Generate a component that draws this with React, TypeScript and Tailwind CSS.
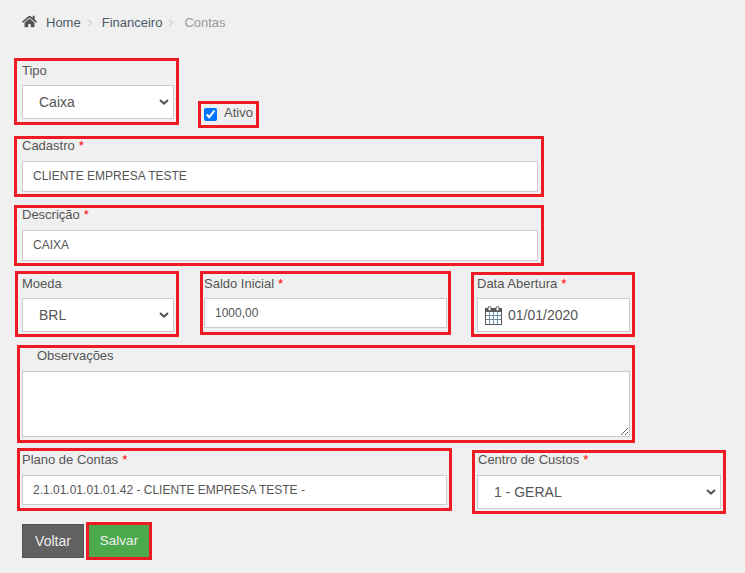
import { ReactNode } from 'react';
import { FaHome } from 'react-icons/fa';
import { ChevronRight } from 'lucide-react';

const inputClass =
  'block h-[30px] w-full rounded-none border border-[#ccc] bg-white px-[10px] text-[12px] text-[#555] outline-none';

function Label({ text, required }: { text: string; required?: boolean }) {
  return (
    <label className="block text-[13px] leading-[14px] text-[#555]">
      {text}
      {required && <span className="ml-[4px] text-[#f00]">*</span>}
    </label>
  );
}

function Select({ value, className }: { value: string; className: string }) {
  return (
    <div className={`relative h-[34px] ${className}`}>
      <select
        className="block h-full w-full appearance-none rounded-none border border-[#ccc] bg-white pl-[16px] text-[14px] text-[#555] outline-none"
        defaultValue={value}
      >
        <option>{value}</option>
      </select>
      <svg width="10" height="6" viewBox="0 0 10 6" className="pointer-events-none absolute right-[5px] top-[14px]">
        <path d="M1 1l4 3.6L9 1" fill="none" stroke="#555" strokeWidth="2" />
      </svg>
    </div>
  );
}

function CalendarIcon() {
  return (
    <svg width="17" height="19" viewBox="0 0 17 19" className="shrink-0">
      <rect x="0.5" y="2.5" width="16" height="16" fill="#fff" stroke="#5a5a5a" />
      <rect x="0.5" y="2.5" width="16" height="3" fill="#5a5a5a" stroke="#5a5a5a" />
      <rect x="3" y="0.5" width="3" height="4.5" rx="1.5" fill="#f4f4f4" stroke="#5a5a5a" />
      <rect x="11" y="0.5" width="3" height="4.5" rx="1.5" fill="#f4f4f4" stroke="#5a5a5a" />
      <path d="M4.5 6v12M8.5 6v12M12.5 6v12" stroke="#6f9cba" strokeWidth="1" />
      <path d="M1 9.5h15M1 13.5h15" stroke="#6f8a9c" strokeWidth="1" />
    </svg>
  );
}

function Crumb({ children, last }: { children: ReactNode; last?: boolean }) {
  return (
    <>
      <span className={last ? 'text-[#999]' : 'text-[#4d5a68]'}>{children}</span>
      {!last && <ChevronRight size={12} strokeWidth={1.5} className="mx-[3px] text-[#aaa]" />}
    </>
  );
}

export default function App() {
  return (
    <div className="min-h-screen bg-[#f0f0f0] font-['Liberation_Sans',Arial,sans-serif]">
      {/* breadcrumb */}
      <div className="mb-[14px] flex h-[44px] items-center pl-[22px] pt-[1px] text-[13px]">
        <FaHome size={15} className="mr-[9px] mt-[-3px] text-[#555]" />
        <Crumb>Home</Crumb>
        <span className="w-[3px]" />
        <Crumb>Financeiro</Crumb>
        <span className="w-[4px]" />
        <Crumb last>Contas</Crumb>
      </div>

      {/* Tipo / Ativo */}
      <div className="flex h-[70px] items-start pl-[14px]">
        <div className="h-[67px] w-[165px] border-[3px] border-[#ed1c24] pl-[5px] pt-[3px]">
          <Label text="Tipo" />
          <Select value="Caixa" className="mt-[7px] w-[152px]" />
        </div>
        <div className="ml-[19px] mt-[43px] flex h-[27px] w-[61px] items-center border-[3px] border-[#ed1c24] pl-[3px]">
          <input type="checkbox" defaultChecked className="m-0 h-[13px] w-[13px]" />
          <span className="ml-[7px] mt-[-3px] text-[13px] text-[#555]">Ativo</span>
        </div>
      </div>

      {/* Cadastro */}
      <div className="ml-[14px] mt-[8px] h-[61px] w-[530px] border-[3px] border-[#ed1c24] pl-[5px]">
        <Label text="Cadastro" required />
        <input className={`${inputClass} mt-[8px] !h-[31px] !w-[516px] pb-[2px]`} defaultValue="CLIENTE EMPRESA TESTE" />
      </div>

      {/* Descrição */}
      <div className="ml-[14px] mt-[8px] h-[61px] w-[530px] border-[3px] border-[#ed1c24] pl-[5px]">
        <Label text="Descrição" required />
        <input className={`${inputClass} mt-[8px] !h-[31px] !w-[516px] pb-[2px]`} defaultValue="CAIXA" />
      </div>

      {/* Moeda / Saldo / Data */}
      <div className="mt-[5px] flex h-[66px] items-start pl-[15px]">
        <div className="h-[66px] w-[164px] border-[3px] border-[#ed1c24] pl-[4px] pt-[3px]">
          <Label text="Moeda" />
          <Select value="BRL" className="mt-[7px] w-[152px]" />
        </div>
        <div className="ml-[21px] h-[64px] w-[251px] border-[3px] border-[#ed1c24] pl-[1px] pt-[3px]">
          <Label text="Saldo Inicial" required />
          <input className={`${inputClass} mt-[7px] !w-[243px]`} defaultValue="1000,00" />
        </div>
        <div className="ml-[20px] mt-[1px] h-[65px] w-[164px] border-[3px] border-[#ed1c24] pl-[3px] pt-[2px]">
          <Label text="Data Abertura" required />
          <div className="mt-[7px] flex h-[34px] w-[153px] items-center border border-[#ccc] bg-white pl-[7px]">
            <CalendarIcon />
            <input className="ml-[6px] w-[100px] bg-transparent text-[14px] text-[#555] outline-none" defaultValue="01/01/2020" />
          </div>
        </div>
      </div>

      {/* Observações */}
      <div className="ml-[17px] mt-[8px] h-[98px] w-[618px] border-[3px] border-[#ed1c24] pl-[2px] pt-[1px]">
        <div className="pl-[15px]">
          <Label text="Observações" />
        </div>
        <textarea className="mt-[8px] block h-[66px] w-[608px] rounded-none border border-[#ccc] bg-white outline-none" />
      </div>

      {/* Plano / Centro */}
      <div className="mt-[5px] flex h-[66px] items-start pl-[17px]">
        <div className="h-[63px] w-[435px] border-[3px] border-[#ed1c24] pl-[2px] pt-[2px]">
          <Label text="Plano de Contas" required />
          <input className={`${inputClass} mt-[8px] !w-[425px]`} defaultValue="2.1.01.01.01.01.42 - CLIENTE EMPRESA TESTE -" />
        </div>
        <div className="ml-[20px] mt-[2px] h-[64px] w-[254px] border-[3px] border-[#ed1c24] pl-[2px]">
          <div className="pl-[1px]">
            <Label text="Centro de Custos" required />
          </div>
          <Select value="1 - GERAL" className="mt-[8px] w-[244px]" />
        </div>
      </div>

      {/* buttons */}
      <div className="mt-[8px] flex items-start pl-[22px]">
        <button className="mt-[2px] h-[34px] w-[62px] border border-[#555] bg-[#616161] text-[14px] text-[#eee]">
          Voltar
        </button>
        <div className="ml-[2px] border-[3px] border-[#ed1c24]">
          <button className="block h-[32px] w-[60px] bg-[#4caa4c] text-[13.5px] text-[#eee]">Salvar</button>
        </div>
      </div>
    </div>
  );
}
